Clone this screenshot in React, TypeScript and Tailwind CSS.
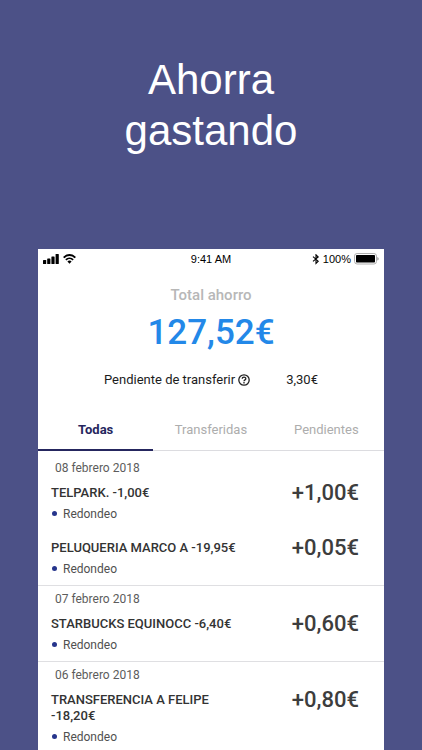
type Movement = { title: string; saved: string };
type Day = { date: string; movements: Movement[] };

const days: Day[] = [
  {
    date: "08 febrero 2018",
    movements: [
      { title: "TELPARK. -1,00€", saved: "+1,00€" },
      { title: "PELUQUERIA MARCO A -19,95€", saved: "+0,05€" },
    ],
  },
  {
    date: "07 febrero 2018",
    movements: [{ title: "STARBUCKS EQUINOCC -6,40€", saved: "+0,60€" }],
  },
  {
    date: "06 febrero 2018",
    movements: [{ title: "TRANSFERENCIA A FELIPE -18,20€", saved: "+0,80€" }],
  },
];

function SignalIcon() {
  return (
    <svg width="16" height="10" viewBox="0 0 16 10" aria-hidden="true">
      <rect x="0" y="6" width="3.2" height="4" rx="0.6" />
      <rect x="4.2" y="4.5" width="3.2" height="5.5" rx="0.6" />
      <rect x="8.4" y="2.5" width="3.2" height="7.5" rx="0.6" />
      <rect x="12.6" y="0" width="3.2" height="10" rx="0.6" />
    </svg>
  );
}

function WifiIcon() {
  return (
    <svg width="13" height="10" viewBox="0 0 13 10" fill="none" stroke="#000" aria-hidden="true">
      <path d="M0.7 3.6 C4 0.2 9 0.2 12.3 3.6" strokeWidth="2" />
      <path d="M2.9 5.9 C4.9 3.9 8.1 3.9 10.1 5.9" strokeWidth="1.9" />
      <path d="M4.4 7.5 C5.6 6.3 7.4 6.3 8.6 7.5 L6.5 9.7 Z" fill="#000" stroke="none" />
    </svg>
  );
}

function BluetoothIcon() {
  return (
    <svg width="8" height="11" viewBox="0 0 8 11" fill="none" stroke="#000" strokeWidth="1.1" aria-hidden="true">
      <path d="M1 2.6 L6.2 7.2 L4 9.4 V0.8 L6.2 3 L1 7.4" />
    </svg>
  );
}

function BatteryIcon() {
  return (
    <svg width="25" height="12" viewBox="0 0 25 12" aria-hidden="true">
      <rect x="0.5" y="0.5" width="22" height="10.5" rx="2.6" fill="#fff" stroke="#b0b0b0" />
      <rect x="2" y="2" width="19" height="7.5" rx="0.8" fill="#000" />
      <path d="M23.4 4 C25 4.4 25 7.2 23.4 7.6 Z" fill="#8c8c8c" />
    </svg>
  );
}

function HelpIcon() {
  return (
    <svg width="12" height="12" viewBox="0 0 12 12" fill="none" stroke="#222" strokeWidth="1.3" aria-hidden="true">
      <circle cx="6" cy="6" r="5.2" />
      <path d="M4.2 4.8 C4.2 2.5 7.8 2.5 7.8 4.7 C7.8 5.9 6 5.9 6 7.3" />
      <path d="M6 8.1 V9.4" />
    </svg>
  );
}

function StatusBar() {
  return (
    <div className="grid grid-cols-3 items-center px-[5px] pt-[3px] font-['Liberation_Sans',sans-serif] text-[11px] leading-[14px] text-black">
      <div className="flex items-center gap-1">
        <SignalIcon />
        <WifiIcon />
      </div>
      <span className="text-center">9:41 AM</span>
      <div className="flex items-center justify-end gap-[3px]">
        <BluetoothIcon />
        <span>100%</span>
        <BatteryIcon />
      </div>
    </div>
  );
}

function Tabs() {
  return (
    <div role="tablist" className="mt-[34px] grid grid-cols-3 border-b border-[#dcdce0] text-[13px] leading-4">
      <button role="tab" aria-selected="true" className="-mb-px border-b-2 border-[#25265e] pb-[11px] font-bold text-[#25265e]">
        Todas
      </button>
      <button role="tab" aria-selected="false" className="pb-[12px] text-[#adadad]">
        Transferidas
      </button>
      <button role="tab" aria-selected="false" className="pb-[12px] text-[#adadad]">
        Pendientes
      </button>
    </div>
  );
}

function MovementRow({ title, saved }: Movement) {
  return (
    <li className="flex items-start justify-between">
      <div className="max-w-[200px]">
        <h3 className="text-[13px] leading-4 font-medium text-[#333]">{title}</h3>
        <p className="mt-[5px] flex items-center gap-[6px] pl-px text-[12px] leading-4 text-[#505050]">
          <span className="mb-px size-[5px] rounded-full bg-[#26358c]" />
          Redondeo
        </p>
      </div>
      <span className="text-[22px] leading-4 font-medium text-[#3d3d3d]">{saved}</span>
    </li>
  );
}

export default function App() {
  return (
    <div className="flex min-h-screen flex-col bg-[#4c5187] font-[Roboto,sans-serif]">
      <h1 className="pt-[54px] text-center font-['Liberation_Sans',sans-serif] text-[42px] leading-[51px] text-white">
        Ahorra
        <br />
        gastando
      </h1>
      <main className="mx-[38px] mt-[93px] flex-1 bg-white">
        <StatusBar />
        <section className="text-center">
          <h2 className="mt-[21px] text-[15px] leading-4 font-medium text-[#b7b7b7]">Total ahorro</h2>
          <p className="mt-2 text-[35px] leading-[44px] font-medium text-[#2388e8]">127,52€</p>
          <div className="mt-[17px] flex items-center justify-between px-[66px] text-[13px] leading-4 text-[#1c1c1c]">
            <span className="flex items-center gap-[3px]">
              Pendiente de transferir
              <button aria-label="Ayuda">
                <HelpIcon />
              </button>
            </span>
            <span>3,30€</span>
          </div>
        </section>
        <Tabs />
        <div className="pt-1">
          {days.map((day) => (
            <section
              key={day.date}
              className="border-b border-[#dfdfe2] pt-[5px] pr-[25px] pb-2 pl-[13px] last:border-b-0 last:pb-1"
            >
              <h2 className="pl-1 text-[12px] leading-4 text-[#5c5c5c]">{day.date}</h2>
              <ul className="mt-[9px] flex flex-col gap-[18px]">
                {day.movements.map((movement) => (
                  <MovementRow key={movement.title} {...movement} />
                ))}
              </ul>
            </section>
          ))}
        </div>
      </main>
    </div>
  );
}
